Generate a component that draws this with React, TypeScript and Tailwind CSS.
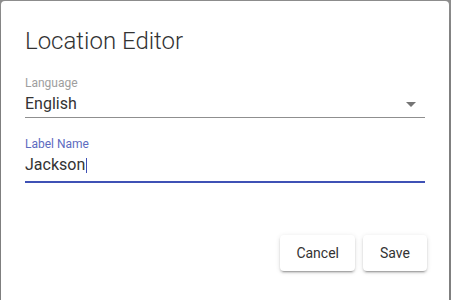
import React from 'react';

const App: React.FC = () => {
  return (
    <div className="h-[300px] w-[451px] overflow-hidden bg-[#8f8f8f] font-['Roboto','Liberation_Sans',sans-serif]">
      <div className="ml-[1px] mt-[1px] h-[320px] w-[448px] rounded-[4px] bg-white shadow-[0_11px_15px_-7px_rgba(0,0,0,0.2),0_24px_38px_3px_rgba(0,0,0,0.14)]">
        {/* Title */}
        <div className="px-6 pt-6">
          <h2 className="text-[24px] font-light leading-[32px] text-[#333333]">Location Editor</h2>
        </div>

        <div className="px-6">
          {/* Language select */}
          <div className="mt-5">
            <div className="text-[12px] leading-[12px] text-[#9e9e9e]">Language</div>
            <div className="mt-[5px] flex items-center justify-between border-b border-[#8f8f8f] pb-[4px]">
              <span className="text-[16px] leading-[19px] text-[#333333]">English</span>
              <svg width="24" height="24" viewBox="0 0 24 24" className="-my-1 mr-0.5 fill-[#757575]">
                <path d="M7 10l5 5 5-5z" />
              </svg>
            </div>
          </div>

          {/* Label name input */}
          <div className="mt-5">
            <div className="text-[12px] leading-[12px] text-[#5c6bc0]">Label Name</div>
            <div className="mt-[5px] flex h-[28px] items-start border-b-2 border-[#3f51b5] pb-[7px]">
              <span className="text-[16px] leading-[19px] text-[#333333]">Jackson</span>
              <span className="ml-[1px] mt-[3px] h-[15px] w-px bg-[#3f51b5]" />
            </div>
          </div>
        </div>

        {/* Actions */}
        <div className="mt-[52px] flex justify-end gap-2 pr-[22px]">
          <button className="h-9 min-w-16 rounded-[4px] bg-white px-4 text-[14px] font-normal text-[#333333] shadow-[0_3px_1px_-2px_rgba(0,0,0,0.2),0_2px_2px_0_rgba(0,0,0,0.14),0_1px_5px_0_rgba(0,0,0,0.12)]">
            Cancel
          </button>
          <button className="h-9 min-w-16 rounded-[4px] bg-white px-4 text-[14px] font-normal text-[#333333] shadow-[0_3px_1px_-2px_rgba(0,0,0,0.2),0_2px_2px_0_rgba(0,0,0,0.14),0_1px_5px_0_rgba(0,0,0,0.12)]">
            Save
          </button>
        </div>
      </div>
    </div>
  );
};

export default App;
